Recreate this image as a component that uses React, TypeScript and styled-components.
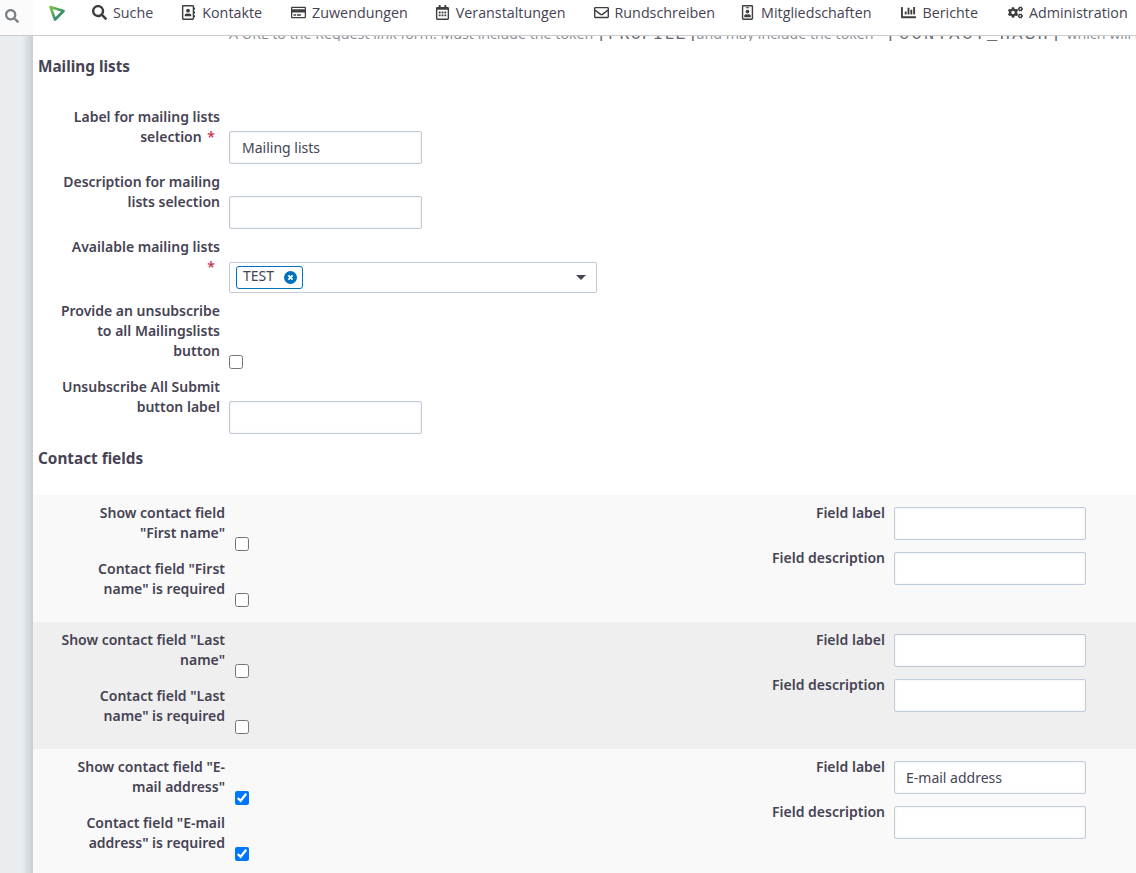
import styled, { createGlobalStyle } from 'styled-components';
import {
  FaSearch,
  FaRegAddressBook,
  FaRegCreditCard,
  FaRegCalendarAlt,
  FaRegEnvelope,
  FaRegIdBadge,
  FaChartBar,
  FaCogs,
} from 'react-icons/fa';

const GlobalStyle = createGlobalStyle`
  html, body {
    margin: 0;
    padding: 0;
    background: #fff;
    height: 873px;
    overflow: hidden;
  }
  body {
    font-family: "Noto Sans", "Open Sans", sans-serif;
    color: #464354;
  }
`;

const Page = styled.div`
  display: flex;
  width: 1136px;
  height: 873px;
  overflow: hidden;
`;

const Side = styled.div`
  width: 33px;
  flex: none;
  background: linear-gradient(to right, #e9edef 0, #e9edef 22px, #c9cfd2 33px);
`;

const SideTop = styled.div`
  height: 36px;
  background: #fbfbfb;
  border-bottom: 1px solid #ccc;
  box-sizing: border-box;
  display: flex;
  align-items: center;
  padding: 0 0 3px 5px;
  color: #7a8084;
  font-size: 14px;
`;

const Main = styled.div`
  flex: 1;
  min-width: 0;
  display: flex;
  flex-direction: column;
`;

const Nav = styled.div`
  height: 36px;
  box-sizing: border-box;
  flex: none;
  background: #fff;
  border-bottom: 1px solid #ccc;
  display: flex;
  align-items: flex-start;
  padding: 3px 0 0 15px;
  white-space: nowrap;
`;

const Logo = styled.svg`
  width: 18px;
  height: 18px;
  margin: 1px 26px 0 0;
`;

const NavItem = styled.div<{ $gap: number }>`
  display: flex;
  align-items: center;
  height: 18px;
  font-family: "Open Sans", sans-serif;
  font-size: 14.3px;
  color: #464354;
  margin-right: ${(p) => p.$gap}px;
  & svg {
    color: #3e3e3e;
    font-size: 15px;
    margin-right: 6px;
  }
`;

const NoteClip = styled.div`
  height: 5px;
  overflow: hidden;
  padding-left: 196px;
  white-space: nowrap;
  flex: none;
`;

const Note = styled.div`
  margin-top: -11px;
  font-family: "Open Sans", sans-serif;
  font-size: 14.3px;
  line-height: 18px;
  color: #8a8d96;
`;

const Token = styled.span<{ $spacing: number; $left: number; $right: number }>`
  font-family: "Liberation Mono", monospace;
  font-size: 17px;
  letter-spacing: ${(p) => p.$spacing}px;
  margin: 0 ${(p) => p.$right}px 0 ${(p) => p.$left}px;
  color: #6a6d76;
`;

const Heading = styled.h3<{ $top: number; $bottom: number }>`
  margin: ${(p) => p.$top}px 0 ${(p) => p.$bottom}px 5px;
  font-size: 15.3px;
  line-height: 22px;
  font-weight: 700;
  color: #464354;
`;

const FormRow = styled.div`
  display: grid;
  grid-template-columns: 187px 1fr;
  column-gap: 9px;
  align-items: end;
  padding-bottom: 8px;
`;

const Label = styled.label<{ $pad: number; $width?: number }>`
  display: block;
  justify-self: end;
  width: ${(p) => (p.$width ? `${p.$width}px` : 'auto')};
  text-align: right;
  font-size: 14px;
  line-height: 20px;
  font-weight: 600;
  color: #464354;
  padding-bottom: ${(p) => p.$pad}px;
`;

const Req = styled.span`
  color: #cf3458;
  margin: 0 5px 0 2px;
`;

const TextInput = styled.div`
  box-sizing: border-box;
  width: 193px;
  height: 33px;
  border: 1px solid #c2cbd8;
  border-radius: 2px;
  background: #fff;
  box-shadow: inset 0 0 3px rgba(0, 0, 0, 0.08);
  padding: 0 12px;
  font-size: 14px;
  line-height: 31px;
  color: #464354;
`;

const Select = styled.div`
  box-sizing: border-box;
  width: 368px;
  height: 31px;
  border: 1px solid #c2cbd8;
  border-radius: 2px;
  display: flex;
  align-items: center;
  justify-content: space-between;
  padding: 0 10px 0 6px;
`;

const Chip = styled.div`
  box-sizing: border-box;
  height: 23px;
  border: 1px solid #0071bd;
  border-radius: 3px;
  padding: 0 5px 0 6px;
  font-size: 14px;
  line-height: 18px;
  display: flex;
  align-items: flex-start;
  gap: 10px;
  & svg {
    margin-top: 4px;
  }
`;

const Caret = styled.div`
  width: 0;
  height: 0;
  border-left: 5px solid transparent;
  border-right: 5px solid transparent;
  border-top: 5px solid #464354;
`;

const Check = styled.input`
  display: block;
  width: 14px;
  height: 14px;
  margin: 0;
`;

const ContactRow = styled.div<{ $shade: boolean }>`
  display: flex;
  justify-content: space-between;
  height: 127px;
  flex: none;
  box-sizing: border-box;
  padding-top: 8px;
  background: ${(p) => (p.$shade ? '#efefef' : '#f9f9f9')};
`;

const ContactLeft = styled.div`
  display: flex;
  flex-direction: column;
  gap: 8px;
`;

const ContactCheckRow = styled.div`
  display: grid;
  grid-template-columns: 192px 14px;
  column-gap: 10px;
  align-items: end;
`;

const ContactRight = styled.div`
  margin-right: 50px;
  display: flex;
  flex-direction: column;
  gap: 8px;
`;

const FieldRow = styled.div`
  display: grid;
  grid-template-columns: 130px 192px;
  column-gap: 9px;
  align-items: start;
  & ${TextInput} {
    width: 192px;
    margin-top: 4px;
    padding: 0 11px;
  }
`;

const rows = [
  {
    show: 'Show contact field "First name"',
    req: 'Contact field "First name" is required',
    value: '',
    checked: false,
  },
  {
    show: 'Show contact field "Last name"',
    req: 'Contact field "Last name" is required',
    value: '',
    checked: false,
  },
  {
    show: 'Show contact field "E-mail address"',
    req: 'Contact field "E-mail address" is required',
    value: 'E-mail address',
    checked: true,
  },
];

const navItems = [
  { label: 'Suche', icon: <FaSearch />, gap: 28 },
  { label: 'Kontakte', icon: <FaRegAddressBook />, gap: 29 },
  { label: 'Zuwendungen', icon: <FaRegCreditCard />, gap: 27 },
  { label: 'Veranstaltungen', icon: <FaRegCalendarAlt />, gap: 28 },
  { label: 'Rundschreiben', icon: <FaRegEnvelope />, gap: 25 },
  { label: 'Mitgliedschaften', icon: <FaRegIdBadge />, gap: 30 },
  { label: 'Berichte', icon: <FaChartBar />, gap: 30 },
  { label: 'Administration', icon: <FaCogs />, gap: 0 },
];

const App = () => {
  return (
    <>
      <GlobalStyle />
      <Page>
        <Side>
          <SideTop>
            <FaSearch />
          </SideTop>
        </Side>
        <Main>
          <Nav>
            <Logo viewBox="0 0 18 18">
              <defs>
                <linearGradient id="logoStroke" x1="0" y1="0" x2="1" y2="1">
                  <stop offset="0" stopColor="#7cc24a" />
                  <stop offset="1" stopColor="#14757f" />
                </linearGradient>
              </defs>
              <path
                d="M2.5 3 L15.5 7 L7 15.5 Z"
                fill="none"
                stroke="url(#logoStroke)"
                strokeWidth="2.6"
                strokeLinejoin="round"
              />
            </Logo>
            {navItems.map((n) => (
              <NavItem key={n.label} $gap={n.gap}>
                {n.icon}
                {n.label}
              </NavItem>
            ))}
          </Nav>
          <NoteClip>
            <Note>
              A URL to the Request link form. Must include the token{' '}
              <Token $spacing={1} $left={0} $right={-5}>[PROFILE]</Token> and may include the token{' '}
              <Token $spacing={2.4} $left={9} $right={0}>[CONTACT_HASH]</Token> which will be replaced
            </Note>
          </NoteClip>
          <Heading $top={14} $bottom={30}>Mailing lists</Heading>
          <FormRow>
            <Label $pad={17} $width={164}>
              Label for mailing lists selection <Req>*</Req>
            </Label>
            <TextInput>Mailing lists</TextInput>
          </FormRow>
          <FormRow>
            <Label $pad={17} $width={164}>Description for mailing lists selection</Label>
            <TextInput />
          </FormRow>
          <FormRow>
            <Label $pad={16} $width={164}>
              Available mailing lists <Req>*</Req>
            </Label>
            <Select>
              <Chip>
                TEST
                <svg width="13" height="13" viewBox="0 0 13 13">
                  <circle cx="6.5" cy="6.5" r="6.5" fill="#0071bd" />
                  <path d="M4.4 4.4 L8.6 8.6 M8.6 4.4 L4.4 8.6" stroke="#fff" strokeWidth="1.8" />
                </svg>
              </Chip>
              <Caret />
            </Select>
          </FormRow>
          <FormRow>
            <Label $pad={8} $width={164}>Provide an unsubscribe to all Mailingslists button</Label>
            <Check type="checkbox" />
          </FormRow>
          <FormRow>
            <Label $pad={17} $width={164}>Unsubscribe All Submit button label</Label>
            <TextInput />
          </FormRow>
          <Heading $top={5} $bottom={26}>Contact fields</Heading>
          {rows.map((r, i) => (
            <ContactRow key={r.show} $shade={i === 1}>
              <ContactLeft>
                {[r.show, r.req].map((text) => (
                  <ContactCheckRow key={text}>
                    <Label $pad={8} $width={165}>{text}</Label>
                    <Check type="checkbox" defaultChecked={r.checked} />
                  </ContactCheckRow>
                ))}
              </ContactLeft>
              <ContactRight>
                <FieldRow>
                  <Label $pad={0}>Field label</Label>
                  <TextInput>{r.value}</TextInput>
                </FieldRow>
                <FieldRow>
                  <Label $pad={0}>Field description</Label>
                  <TextInput />
                </FieldRow>
              </ContactRight>
            </ContactRow>
          ))}
        </Main>
      </Page>
    </>
  );
};

export default App;
